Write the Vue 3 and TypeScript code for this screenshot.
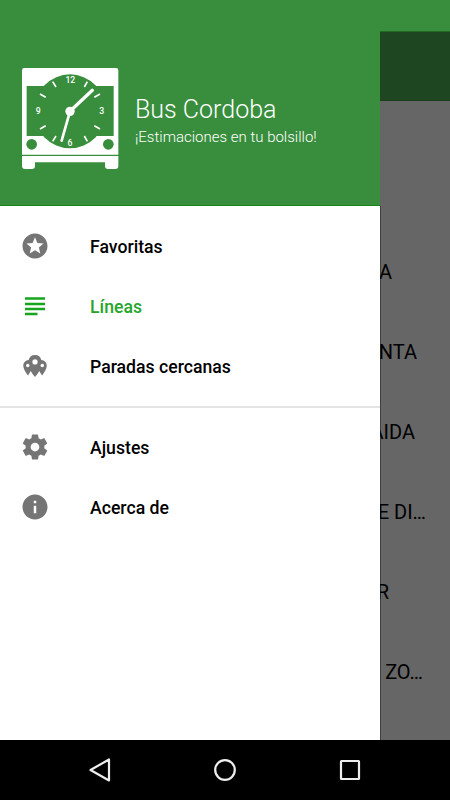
<script setup lang="ts">
type IconName = 'star' | 'lines' | 'pins' | 'gear' | 'info'

interface MenuItem {
  label: string
  icon: IconName
  active?: boolean
}

interface ListRow {
  text: string
  width: number
}

const groups: MenuItem[][] = [
  [
    { label: 'Favoritas', icon: 'star' },
    { label: 'Líneas', icon: 'lines', active: true },
    { label: 'Paradas cercanas', icon: 'pins' },
  ],
  [
    { label: 'Ajustes', icon: 'gear' },
    { label: 'Acerca de', icon: 'info' },
  ],
]

const icons: Record<IconName, string> = {
  star: 'M11.99 2C6.47 2 2 6.48 2 12s4.47 10 9.99 10C17.52 22 22 17.52 22 12S17.52 2 11.99 2zm4.24 16L12 15.45 7.77 18l1.12-4.81-3.73-3.23 4.92-.42L12 5l1.92 4.53 4.92.42-3.73 3.23L16.23 18z',
  lines: 'M4 5h16v2H4zM4 9.300h16v2H4zM4 13.300h16v2H4zM4 17.300h10v2H4z',
  pins: 'M12 3.200a5.300 5.300 0 0 0-5.100 4.100 4.200 4.200 0 0 0-4.300 4.300c0 2.700 1.800 5.200 3.800 7.900l2.200-3.600c.8 1.500 2 3.100 3.400 4.800 1.400-1.700 2.600-3.300 3.400-4.800l2.200 3.600c2-2.700 3.800-5.200 3.800-7.900a4.200 4.200 0 0 0-4.300-4.300A5.300 5.300 0 0 0 12 3.200zM12 6.600a2.100 2.100 0 1 1 0 4.200 2.100 2.100 0 0 1 0-4.200zM6.200 10.200a1.400 1.400 0 1 1 0 2.800 1.400 1.400 0 0 1 0-2.800zM17.800 10.200a1.400 1.400 0 1 1 0 2.800 1.400 1.400 0 0 1 0-2.800z',
  gear: 'M19.43 12.98c.04-.32.07-.64.07-.98s-.03-.66-.07-.98l2.11-1.65c.19-.15.24-.42.12-.64l-2-3.46c-.12-.22-.39-.3-.61-.22l-2.49 1c-.52-.4-1.08-.73-1.69-.98l-.38-2.65C14.46 2.18 14.25 2 14 2h-4c-.25 0-.46.18-.49.42l-.38 2.65c-.61.25-1.17.59-1.69.98l-2.49-1c-.23-.09-.49 0-.61.22l-2 3.46c-.13.22-.07.49.12.64l2.11 1.65c-.04.32-.07.65-.07.98s.03.66.07.98l-2.11 1.65c-.19.15-.24.42-.12.64l2 3.46c.12.22.39.3.61.22l2.49-1c.52.4 1.08.73 1.69.98l.38 2.65c.03.24.24.42.49.42h4c.25 0 .46-.18.49-.42l.38-2.65c.61-.25 1.17-.59 1.69-.98l2.49 1c.23.09.49 0 .61-.22l2-3.46c.12-.22.07-.49-.12-.64l-2.11-1.65zM12 15.5c-1.93 0-3.500-1.570-3.500-3.500s1.570-3.500 3.500-3.500 3.500 1.570 3.500 3.500-1.570 3.500-3.500 3.500z',
  info: 'M12 2C6.48 2 2 6.48 2 12s4.48 10 10 10 10-4.48 10-10S17.52 2 12 2zm1 15h-2v-6h2v6zm0-8h-2V7h2v2z',
}

const rows: ListRow[] = [
  { text: 'A', width: 12 },
  { text: 'NTA', width: 37 },
  { text: 'AIDA', width: 35 },
  { text: 'E DI…', width: 46 },
  { text: 'R', width: 9 },
  { text: 'ZO…', width: 43 },
]
</script>

<template>
  <div class="screen">
    <div class="main">
      <aside class="drawer">
        <header class="header">
          <svg class="logo" viewBox="36 24 291 303">
            <path class="white" d="M43 24H318Q325 24 325 31V284H36V31Q36 24 43 24ZM36 288H325V318Q325 327 316 327H294Q285 327 285 318V307H75V318Q75 327 66 327H45Q36 327 36 318Z" />
            <path class="green" d="M50 78H311V228H50Z" />
            <ellipse class="green" cx="180" cy="154" rx="108" ry="111" />
            <circle class="green" cx="65" cy="253" r="16" />
            <circle class="green" cx="295" cy="253" r="16" />
            <path class="tick" d="M128 65l10 16M232 65l-9 16M90 102l17 10M270 102l-17 10M90 207l17-10M270 207l-17-10M128 244l10-16M232 244l-9-16" />
            <path class="hand" d="M180 154L247 91" />
            <path class="hand long" d="M180 154L155 242" />
            <circle class="white" cx="180" cy="154" r="14" />
            <text class="num" x="181" y="70">12</text>
            <text class="num" x="275" y="163">3</text>
            <text class="num" x="180" y="257">6</text>
            <text class="num" x="85" y="163">9</text>
          </svg>
          <div class="titles">
            <h1>Bus Cordoba</h1>
            <p>¡Estimaciones en tu bolsillo!</p>
          </div>
        </header>
        <nav>
          <ul v-for="(group, i) in groups" :key="i" class="group">
            <li v-for="item in group" :key="item.label" class="item" :class="{ active: item.active }">
              <svg class="icon" viewBox="0 0 24 24"><path fill-rule="evenodd" :d="icons[item.icon]" /></svg>
              <span class="label">{{ item.label }}</span>
            </li>
          </ul>
        </nav>
      </aside>
      <section class="behind">
        <div class="status"></div>
        <div class="toolbar"></div>
        <ul class="list">
          <li v-for="row in rows" :key="row.text" class="row">
            <span class="clip" :style="{ width: row.width + 'px' }"><span>{{ row.text }}</span></span>
          </li>
        </ul>
      </section>
    </div>
    <footer class="navbar">
      <svg viewBox="0 0 30 30"><path d="M5.500 15L24 4.500V25.500Z" /></svg>
      <svg viewBox="0 0 30 30"><circle cx="15" cy="15" r="9.800" /></svg>
      <svg viewBox="0 0 30 30"><rect x="6" y="6" width="18" height="18" rx=".5" /></svg>
    </footer>
  </div>
</template>

<style>
body {
  margin: 0;
}
</style>

<style scoped>
.screen {
  width: 450px;
  height: 800px;
  display: flex;
  flex-direction: column;
  overflow: hidden;
  font-family: Roboto, "Liberation Sans", sans-serif;
}
.main {
  display: grid;
  grid-template-columns: 380px 70px;
  height: 740px;
}
.drawer {
  background: #fff;
}
.header {
  box-sizing: border-box;
  height: 206px;
  padding: 68px 0 0 22px;
  display: flex;
  align-items: flex-start;
  background: #388e3c;
  border-bottom: 1px solid #16851a;
}
.logo {
  width: 97px;
  height: 101px;
  flex: none;
}
.white {
  fill: #fff;
}
.green {
  fill: #388e3c;
}
.tick,
.hand {
  fill: none;
  stroke: #fff;
  stroke-width: 5;
}
.hand {
  stroke-width: 10;
  stroke-linecap: round;
}
.hand.long {
  stroke-width: 8;
}
.num {
  fill: #fff;
  font-size: 26px;
  font-weight: 500;
  text-anchor: middle;
}
.titles {
  padding: 26px 0 0 16px;
  color: #fff;
  white-space: nowrap;
}
h1 {
  margin: 0;
  font-size: 25px;
  line-height: 32px;
  font-weight: 300;
}
p {
  margin: 1px 0 0 0;
  font-size: 15px;
  line-height: 20px;
  font-weight: 300;
}
ul {
  list-style: none;
  margin: 0;
  padding: 0;
}
.group {
  padding: 10px 0;
}
.group + .group {
  padding-top: 9px;
  border-top: 2px solid #e4e4e4;
}
.item {
  display: flex;
  align-items: center;
  height: 60px;
  padding-left: 20px;
  gap: 40px;
  font-size: 17.650px;
  font-weight: 500;
  color: #000;
}
.label {
  padding-top: 2px;
}
.icon {
  width: 30px;
  height: 30px;
  fill: #757575;
}
.active {
  color: #25a62b;
}
.active .icon {
  fill: #16a51c;
}
.behind {
  background: #666;
  display: flex;
  flex-direction: column;
}
.status {
  height: 31px;
  background: #388e3c;
}
.toolbar {
  box-sizing: border-box;
  height: 70px;
  background: #1e4620;
  border-top: 1px solid #216b24;
  border-bottom: 1px solid #173f19;
}
.list {
  flex: 1;
  padding-top: 131px;
  background: linear-gradient(#404040, #404040) 0 105px / 1px 100% no-repeat;
}
.row {
  height: 80px;
  display: flex;
  align-items: flex-start;
  font-size: 20px;
  line-height: 80px;
  color: #000;
}
.clip {
  display: flex;
  justify-content: flex-end;
  overflow: hidden;
  white-space: nowrap;
}
.navbar {
  height: 60px;
  background: #000;
  display: flex;
  justify-content: center;
  align-items: center;
  gap: 95px;
}
.navbar svg {
  width: 30px;
  height: 30px;
  fill: none;
  stroke: #eee;
  stroke-width: 2.200;
  stroke-linejoin: round;
}
</style>
